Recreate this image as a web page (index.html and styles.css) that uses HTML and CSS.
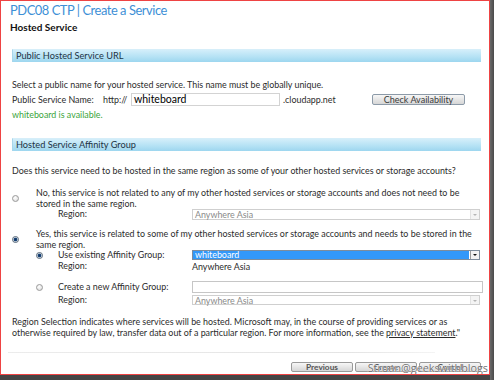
FILE: index.html
```html
<!DOCTYPE html>
<html>
<head>
<meta charset="utf-8">
<link rel="stylesheet" href="styles.css">
</head>
<body>
<div class="frame">
  <h1 class="title">PDC08 CTP | Create a Service</h1>
  <h2 class="subtitle">Hosted Service</h2>

  <section class="section">
    <div class="bar">Public Hosted Service URL</div>
    <p class="intro">Select a public name for your hosted service. This name must be globally unique.</p>
    <div class="name-row">
      <span class="name-label">Public Service Name:</span>
      <span class="prefix">http://</span>
      <span class="textbox name-box">whiteboard</span>
      <span class="suffix">.cloudapp.net</span>
      <span class="btn check-btn">Check Availability</span>
    </div>
    <p class="ok">whiteboard is available.</p>
  </section>

  <section class="section">
    <div class="bar bar2">Hosted Service Affinity Group</div>
    <p class="question">Does this service need to be hosted in the same region as some of your other hosted services or storage accounts?</p>

    <div class="affinity">
      <div class="opt opt1">
        <span class="radio"></span>
        <span class="opt-text">No, this service is not related to any of my other hosted services or storage accounts and does not need to be stored in the same region.</span>
      </div>
      <div class="sub">
        <span class="sub-radio"></span>
        <span class="sub-label">Region:</span>
        <span class="select disabled"><span class="sel-text">Anywhere Asia</span><span class="arrow"></span></span>
      </div>

      <div class="opt opt2">
        <span class="radio checked"></span>
        <span class="opt-text">Yes, this service is related to some of my other hosted services or storage accounts and needs to be stored in the same region.</span>
      </div>
      <div class="sub">
        <span class="sub-radio"><span class="radio checked"></span></span>
        <span class="sub-label">Use existing Affinity Group:</span>
        <span class="select active"><span class="sel-text">whiteboard</span><span class="arrow"></span></span>
      </div>
      <div class="sub sub-plain">
        <span class="sub-radio"></span>
        <span class="sub-label">Region:</span>
        <span class="plain">Anywhere Asia</span>
      </div>
      <div class="sub sub-create">
        <span class="sub-radio"><span class="radio"></span></span>
        <span class="sub-label">Create a new Affinity Group:</span>
        <span class="textbox group-box"></span>
      </div>
      <div class="sub sub-last">
        <span class="sub-radio"></span>
        <span class="sub-label">Region:</span>
        <span class="select disabled"><span class="sel-text">Anywhere Asia</span><span class="arrow"></span></span>
      </div>
    </div>

    <p class="note">Region Selection indicates where services will be hosted. Microsoft may, in the course of providing services or as otherwise required by law, transfer data out of a particular region. For more information, see the <a class="link">privacy statement</a>."</p>
  </section>

  <hr class="rule">
  <div class="actions">
    <span class="btn act-btn">Previous</span>
    <span class="btn act-btn">Create</span>
    <span class="btn act-btn">Cancel</span>
  </div>
  <div class="watermark">Struan@geekswithblogs</div>
</div>
</body>
</html>
```

FILE: styles.css
```css
html, body {
  margin: 0;
  padding: 0;
}
body {
  width: 494px;
  height: 380px;
  background: linear-gradient(to right, #8a8a8a 0, #6a6a6a 490px, #4a4a4a 494px);
  font-family: Lato, "Liberation Sans", sans-serif;
  color: #2b2b2b;
  overflow: hidden;
}
.frame {
  position: relative;
  width: 488px;
  height: 373px;
  border: 1px solid #ee4343;
  background: #fff;
  box-shadow: 0 5px 0 #454545;
  overflow: hidden;
}
.title {
  margin: 0 0 0 9px;
  font-size: 12.9px;
  letter-spacing: -0.45px;
  line-height: 18px;
  font-weight: normal;
  color: #3d8fd6;
}
.subtitle {
  margin: 3px 0 0 9px;
  font-size: 10px;
  line-height: 11px;
  font-weight: bold;
  color: #111;
}
.section {
  margin: 0 8px 0 11px;
}
.bar {
  margin-top: 16px;
  height: 13px;
  box-sizing: border-box;
  padding-left: 3px;
  border-top: 1px solid #d6eef9;
  border-left: 1px solid #a9d6ea;
  background: linear-gradient(#d3eefa, #b3e1f4 60%, #9dd6ef);
  font-size: 9.2px;
  line-height: 12px;
  color: #1e3344;
}
.bar2 {
  margin-top: 17px;
}
p {
  margin: 0;
}
.intro, .ok, .question {
  font-size: 8.9px;
  line-height: 12px;
}
.intro {
  margin-top: 17px;
}
.name-row {
  display: flex;
  align-items: center;
  margin-top: 2px;
  height: 13px;
  font-size: 8.9px;
}
.name-label {
  width: 91px;
}
.prefix {
  width: 28px;
}
.textbox {
  box-sizing: border-box;
  border: 1px solid #d3d3d3;
  background: #fff;
}
.name-box {
  width: 149px;
  height: 13px;
  padding-left: 2px;
  font-size: 10.5px;
  line-height: 11px;
  color: #000;
}
.suffix {
  margin-left: 3px;
  width: 89px;
}
.btn {
  display: inline-flex;
  align-items: center;
  justify-content: center;
  box-sizing: border-box;
  border: 1px solid #8c9aa8;
  border-radius: 2px;
  background: linear-gradient(#f7f7f7, #e6e6e6 50%, #d6d6d6);
  color: #3a3a3a;
  font-size: 9px;
}
.check-btn {
  width: 93px;
  height: 11px;
}
.ok {
  margin-top: 3px;
  color: #3aa43a;
}
.question {
  margin-top: 14px;
}
.affinity {
  display: grid;
  grid-template-columns: 24px 22px 134px 1fr;
  font-size: 8.9px;
  line-height: 10.5px;
}
.opt {
  grid-column: 1 / -1;
  display: grid;
  grid-template-columns: 24px 1fr;
  align-items: center;
}
.opt1 {
  margin-top: 11px;
}
.opt2 {
  margin-top: 9px;
}
.opt-text {
  padding-right: 8px;
}
.radio {
  display: block;
  width: 7px;
  height: 7px;
  box-sizing: border-box;
  border-radius: 50%;
  border: 1px solid #9a9a9a;
  background: radial-gradient(circle at 40% 35%, #fff, #d8d8d8);
}
.radio.checked {
  border-color: #5a6a7a;
  background: radial-gradient(circle, #0d2f5a 0, #1d4a80 1.6px, #dfe5ea 2.2px, #bcc6d0);
}
.sub {
  grid-column: 1 / -1;
  display: grid;
  grid-template-columns: 24px 22px 134px 1fr;
  align-items: center;
}
.sub-radio {
  grid-column: 2;
}
.sub-label {
  grid-column: 3;
}
.select {
  grid-column: 4;
  display: flex;
  box-sizing: border-box;
  height: 11px;
  margin-right: 1px;
  border: 1px solid #cfcfcf;
  background: #fff;
}
.sel-text {
  flex: 1;
  padding-left: 2px;
  line-height: 9px;
  color: #8a8a8a;
}
.arrow {
  position: relative;
  width: 8px;
  border-left: 1px solid #e2e2e2;
  background: #f4f4f4;
}
.arrow::after {
  content: "";
  position: absolute;
  left: 2px;
  top: 4px;
  border-left: 2px solid transparent;
  border-right: 2px solid transparent;
  border-top: 2px solid #b5b5b5;
}
.select.active {
  height: 10px;
  border-color: #7d8c9c;
}
.select.active .sel-text {
  background: #3298fa;
  color: #fff;
  line-height: 8px;
  margin-right: 1px;
}
.select.active .arrow {
  background: #f2f2f2;
  border-left: 1px solid #9a9a9a;
}
.select.active .arrow::after {
  border-top-color: #111;
  top: 3px;
}
.plain {
  grid-column: 4;
  margin-top: 1px;
}
.sub-create {
  margin-top: 9px;
}
.group-box {
  grid-column: 4;
  height: 12px;
  margin-right: -2px;
  border-color: #c6c6c6;
}
.sub-last {
  margin-top: 2px;
}
.sub-last .select {
  height: 10px;
}
.note {
  margin-top: 10px;
  font-size: 8.9px;
  line-height: 11px;
}
.link {
  color: #2b2b2b;
  text-decoration: underline;
}
.rule {
  margin: 14px 54px 0 7px;
  height: 1px;
  border: 0;
  background: linear-gradient(to right, #ececec, #e4e4e4 80%, #f4f4f4);
}
.actions {
  display: flex;
  justify-content: flex-end;
  gap: 2px;
  margin: 9px 8px 0 0;
}
.act-btn {
  width: 62px;
  height: 10px;
  border-color: #9a9a9a;
  font-weight: bold;
  font-size: 8.3px;
  color: #555;
}
.watermark {
  position: absolute;
  right: 1px;
  bottom: -1px;
  font-family: "Open Sans", sans-serif;
  font-size: 10.8px;
  line-height: 14px;
  color: #6f6f6f;
  text-shadow: 0 0 1px #fff, 0 0 1px #fff;
}
```
